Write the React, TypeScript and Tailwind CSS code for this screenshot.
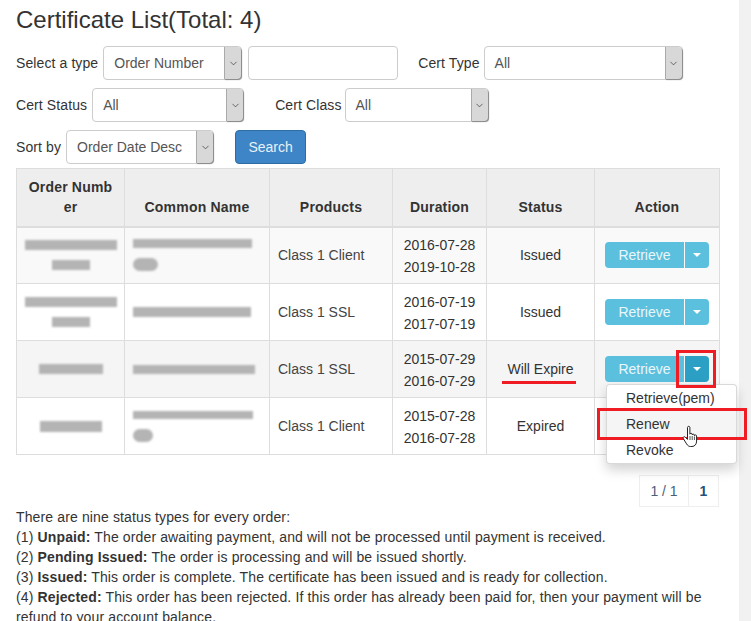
import { ChevronDown } from "lucide-react"

type Bar = { w: number; h: number; round?: boolean }

const rows: { id: Bar[]; name: Bar[]; product: string; from: string; to: string; status: string }[] = [
  {
    id: [{ w: 92, h: 10 }, { w: 38, h: 10 }],
    name: [{ w: 119, h: 9 }, { w: 25, h: 13, round: true }],
    product: "Class 1 Client",
    from: "2016-07-28",
    to: "2019-10-28",
    status: "Issued",
  },
  {
    id: [{ w: 92, h: 10 }, { w: 38, h: 10 }],
    name: [{ w: 118, h: 10 }],
    product: "Class 1 SSL",
    from: "2016-07-19",
    to: "2017-07-19",
    status: "Issued",
  },
  {
    id: [{ w: 64, h: 10 }],
    name: [{ w: 122, h: 9 }],
    product: "Class 1 SSL",
    from: "2015-07-29",
    to: "2016-07-29",
    status: "Will Expire",
  },
  {
    id: [{ w: 62, h: 11 }],
    name: [{ w: 120, h: 8 }, { w: 20, h: 13, round: true }],
    product: "Class 1 Client",
    from: "2015-07-28",
    to: "2016-07-28",
    status: "Expired",
  },
]

function Smudge({ bars, start }: { bars: Bar[]; start?: boolean }) {
  return (
    <div className={`flex flex-col justify-center gap-[10px] ${start ? "items-start" : "items-center"}`}>
      {bars.map((b, i) => (
        <div
          key={i}
          className={`bg-[#b4b4b4] blur-[1px] ${b.round ? "rounded-full" : ""}`}
          style={{ width: b.w, height: b.h }}
        />
      ))}
    </div>
  )
}

function Select({ label, width }: { label: string; width: string }) {
  return (
    <div className={`flex h-[34px] shrink-0 items-stretch rounded border border-[#ccc] bg-white tracking-normal ${width}`}>
      <span className="flex-1 overflow-hidden whitespace-nowrap pl-[10px] leading-[32px] text-[#555]">{label}</span>
      <span className="flex w-[17px] items-center justify-center rounded-r border-l border-[#aaa] bg-[#d8d8d8] shadow-[1px_1px_1px_#888]">
        <ChevronDown size={11} strokeWidth={1.5} className="text-[#333]" />
      </span>
    </div>
  )
}

export default function App() {
  return (
    <div className="relative flex h-[621px] w-[751px] overflow-hidden bg-white font-['Liberation_Sans',Arial,sans-serif] text-sm text-[#333]">
      <main className="w-[739px] shrink-0 pl-4 pr-5">
        <h1 className="mt-[5px] h-[41px] text-2xl leading-[30px]">Certificate List(Total: 4)</h1>

        <div className="flex h-[34px] items-center tracking-[0.1px]">
          <span className="mr-[5px]">Select a type</span>
          <Select label="Order Number" width="w-[139px]" />
          <div className="ml-[6px] h-[34px] w-[150px] rounded border border-[#ccc] bg-white" />
          <span className="ml-5 mr-1">Cert Type</span>
          <Select label="All" width="w-[199px]" />
        </div>

        <div className="mt-2 flex h-[34px] items-center tracking-[0.1px]">
          <span className="mr-[5px]">Cert Status</span>
          <Select label="All" width="w-[152px]" />
          <span className="ml-[31px] mr-[3px]">Cert Class</span>
          <Select label="All" width="w-[144px]" />
        </div>

        <div className="mt-2 flex h-[34px] items-center tracking-[0.1px]">
          <span className="mr-[5px]">Sort by</span>
          <Select label="Order Date Desc" width="w-[148px]" />
          <button className="ml-[21px] h-[34px] w-[71px] rounded border border-[#2e6da4] bg-[#3d85c6] tracking-normal text-[#e8f1f8]">
            Search
          </button>
        </div>

        <table className="mt-1 w-[703px] table-fixed border-collapse">
          <colgroup>
            <col className="w-[108px]" />
            <col className="w-[145px]" />
            <col className="w-[123px]" />
            <col className="w-[94px]" />
            <col className="w-[108px]" />
            <col className="w-[125px]" />
          </colgroup>
          <thead>
            <tr className="h-[58px] bg-[#eee] tracking-[0.2px]">
              <th className="border border-b-2 border-[#ddd] px-[10px] pb-[9px] align-bottom leading-5 font-bold break-all">
                Order Number
              </th>
              {["Common Name", "Products", "Duration", "Status", "Action"].map((h) => (
                <th key={h} className="border border-b-2 border-[#ddd] px-2 pb-[9px] align-bottom leading-5 font-bold">
                  {h}
                </th>
              ))}
            </tr>
          </thead>
          <tbody>
            {rows.map((r, i) => (
              <tr key={i} className={`h-[57px] ${i === 2 ? "bg-[#f5f5f5]" : i === 0 ? "bg-[#f9f9f9]" : "bg-white"}`}>
                <td className="border border-[#ddd] px-2">
                  <Smudge bars={r.id} />
                </td>
                <td className="border border-[#ddd] pl-2">
                  <Smudge bars={r.name} start />
                </td>
                <td className="border border-[#ddd] px-2 text-[#444]">{r.product}</td>
                <td className="border border-[#ddd] px-2 pt-[2px] text-center leading-[22px]">
                  {r.from}
                  <br />
                  {r.to}
                </td>
                <td className="border border-[#ddd] px-2 text-center">{r.status}</td>
                <td className="border border-[#ddd] px-2">
                  {i < 3 && (
                    <div className="ml-[2px] flex h-[26px] w-[104px] text-[#e9f6fa]">
                      <span className="flex flex-1 items-center justify-center rounded-l bg-[#5bc0de]">Retrieve</span>
                      <span
                        className={`ml-px flex w-6 items-center justify-center rounded-r ${
                          i === 2 ? "bg-[#2b9fc4]" : "bg-[#5bc0de]"
                        }`}
                      >
                        <span className="h-0 w-0 border-x-4 border-t-4 border-x-transparent border-t-white" />
                      </span>
                    </div>
                  )}
                </td>
              </tr>
            ))}
          </tbody>
        </table>

        <div className="mt-5 flex h-8 justify-end">
          <span className="flex w-[50px] items-center justify-center border border-[#eee] text-[#4a5f7a]">1 / 1</span>
          <span className="-ml-px flex w-[31px] items-center justify-center border border-[#eee] font-bold text-[#23527c]">
            1
          </span>
        </div>

        <div className="leading-5 tracking-[0.13px]">
          <p>There are nine status types for every order:</p>
          <p>
            (1) <b>Unpaid:</b> The order awaiting payment, and will not be processed until payment is received.
          </p>
          <p>
            (2) <b>Pending Issued:</b> The order is processing and will be issued shortly.
          </p>
          <p>
            (3) <b>Issued:</b> This order is complete. The certificate has been issued and is ready for collection.
          </p>
          <p>
            (4) <b>Rejected:</b> This order has been rejected. If this order has already been paid for, then your
            payment will be refund to your account balance.
          </p>
        </div>
      </main>
      <div className="flex-1 bg-[#f1f1f1]" />

      {/* dropdown menu opened from row 3 */}
      <ul className="absolute left-[606px] top-[384px] w-[131px] rounded border border-black/15 bg-white shadow-[0_6px_12px_rgba(0,0,0,0.175)]">
        <li className="h-[26px] pl-[19px] leading-[26px]">Retrieve(pem)</li>
        <li className="h-[26px] bg-[#f5f5f5] pl-[19px] leading-[26px]">Renew</li>
        <li className="h-[26px] pl-[19px] leading-[26px]">Revoke</li>
      </ul>

      {/* annotations painted on the screenshot */}
      <div className="absolute left-[502px] top-[381px] h-[3px] w-[74px] bg-[#f01c24]" />
      <div className="absolute left-[676px] top-[350px] h-[38px] w-[40px] border-[3px] border-[#f01c24]" />
      <div className="absolute left-[597px] top-[408px] h-[32px] w-[150px] border-[3px] border-[#f01c24]" />

      <svg className="absolute left-[681px] top-[425px]" width="20" height="24" viewBox="0 0 20 24" fill="none">
        <path
          d="M6.5 2.5c0-1.6 2.4-1.6 2.4 0v6.7c0-1.2 2.3-1.2 2.3 0v.8c0-1.1 2.2-1.1 2.2 0v.7c0-1 2.2-1 2.2.2v5.2c0 3-1.8 5.4-4.6 5.4H9.6c-2 0-3-1-4-2.6L2.3 13.6c-.9-1.4.9-2.6 2-1.4l2.2 2.2z"
          fill="#fff"
          stroke="#222"
          strokeWidth="1"
          strokeLinejoin="round"
        />
        <path d="M9 11v4M11.2 11v4M13.4 11.5V15" stroke="#222" strokeWidth="0.8" />
      </svg>
    </div>
  )
}
